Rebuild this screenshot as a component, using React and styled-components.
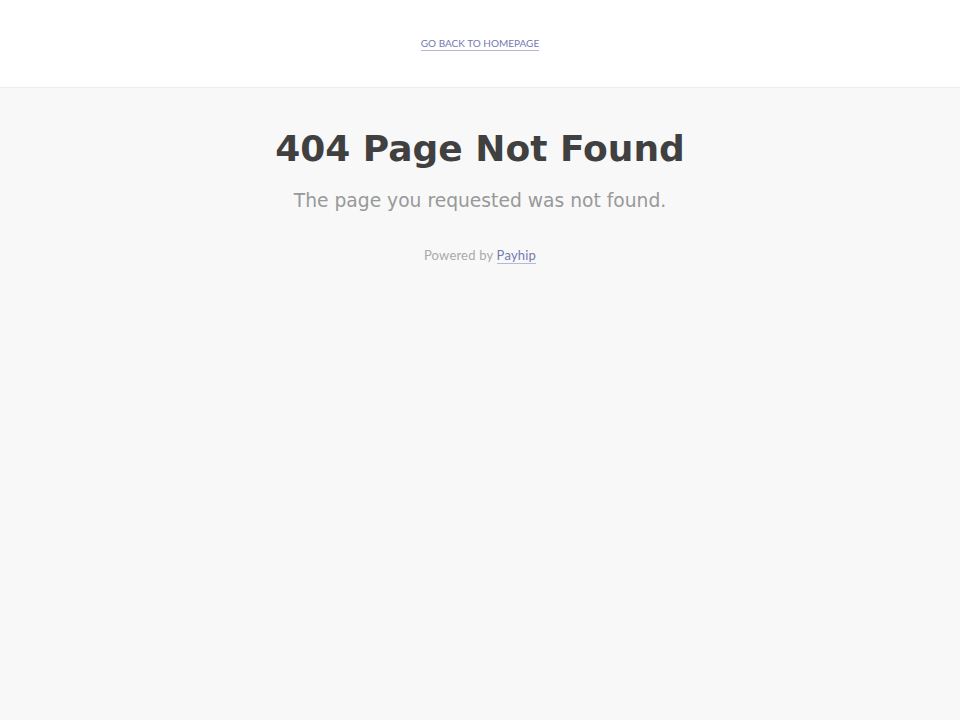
import React from "react";
import styled, { createGlobalStyle } from "styled-components";

const GlobalStyle = createGlobalStyle`
  html, body {
    margin: 0;
    padding: 0;
    background: #f8f8f8;
  }
  body {
    font-family: "DejaVu Sans", sans-serif;
  }
`;

const Header = styled.header`
  height: 87px;
  background: #fff;
  border-bottom: 1px solid #ececec;
  display: flex;
  align-items: center;
  justify-content: center;
`;

const BackLink = styled.a`
  font-family: "Lato", "Open Sans", sans-serif;
  font-size: 10px;
  letter-spacing: 0;
  text-transform: uppercase;
  color: #7479b0;
  text-decoration: none;
  border-bottom: 1px solid #b5b8d6;
  padding-bottom: 1px;
  margin-top: 1px;
`;

const Main = styled.main`
  box-sizing: border-box;
  min-height: 632px;
  display: flex;
  flex-direction: column;
  align-items: center;
  padding-top: 39px;
`;

const Title = styled.h1`
  margin: 0;
  font-size: 36px;
  font-weight: bold;
  color: #404040;
  line-height: 44px;
`;

const Subtitle = styled.p`
  margin: 17px 0 0;
  font-size: 18.7px;
  color: #999;
  line-height: 26px;
`;

const Powered = styled.p`
  margin: 33px 0 0;
  font-family: "Lato", "Open Sans", sans-serif;
  font-size: 13px;
  color: #aaa;
  letter-spacing: 0.2px;
`;

const PayhipLink = styled.a`
  color: #7479b0;
  text-decoration: none;
  border-bottom: 1px solid #b5b8d6;
`;

export default function App() {
  return (
    <>
      <GlobalStyle />
      <Header>
        <BackLink href="#">Go back to homepage</BackLink>
      </Header>
      <Main>
        <Title>404 Page Not Found</Title>
        <Subtitle>The page you requested was not found.</Subtitle>
        <Powered>
          Powered by <PayhipLink href="#">Payhip</PayhipLink>
        </Powered>
      </Main>
    </>
  );
}
